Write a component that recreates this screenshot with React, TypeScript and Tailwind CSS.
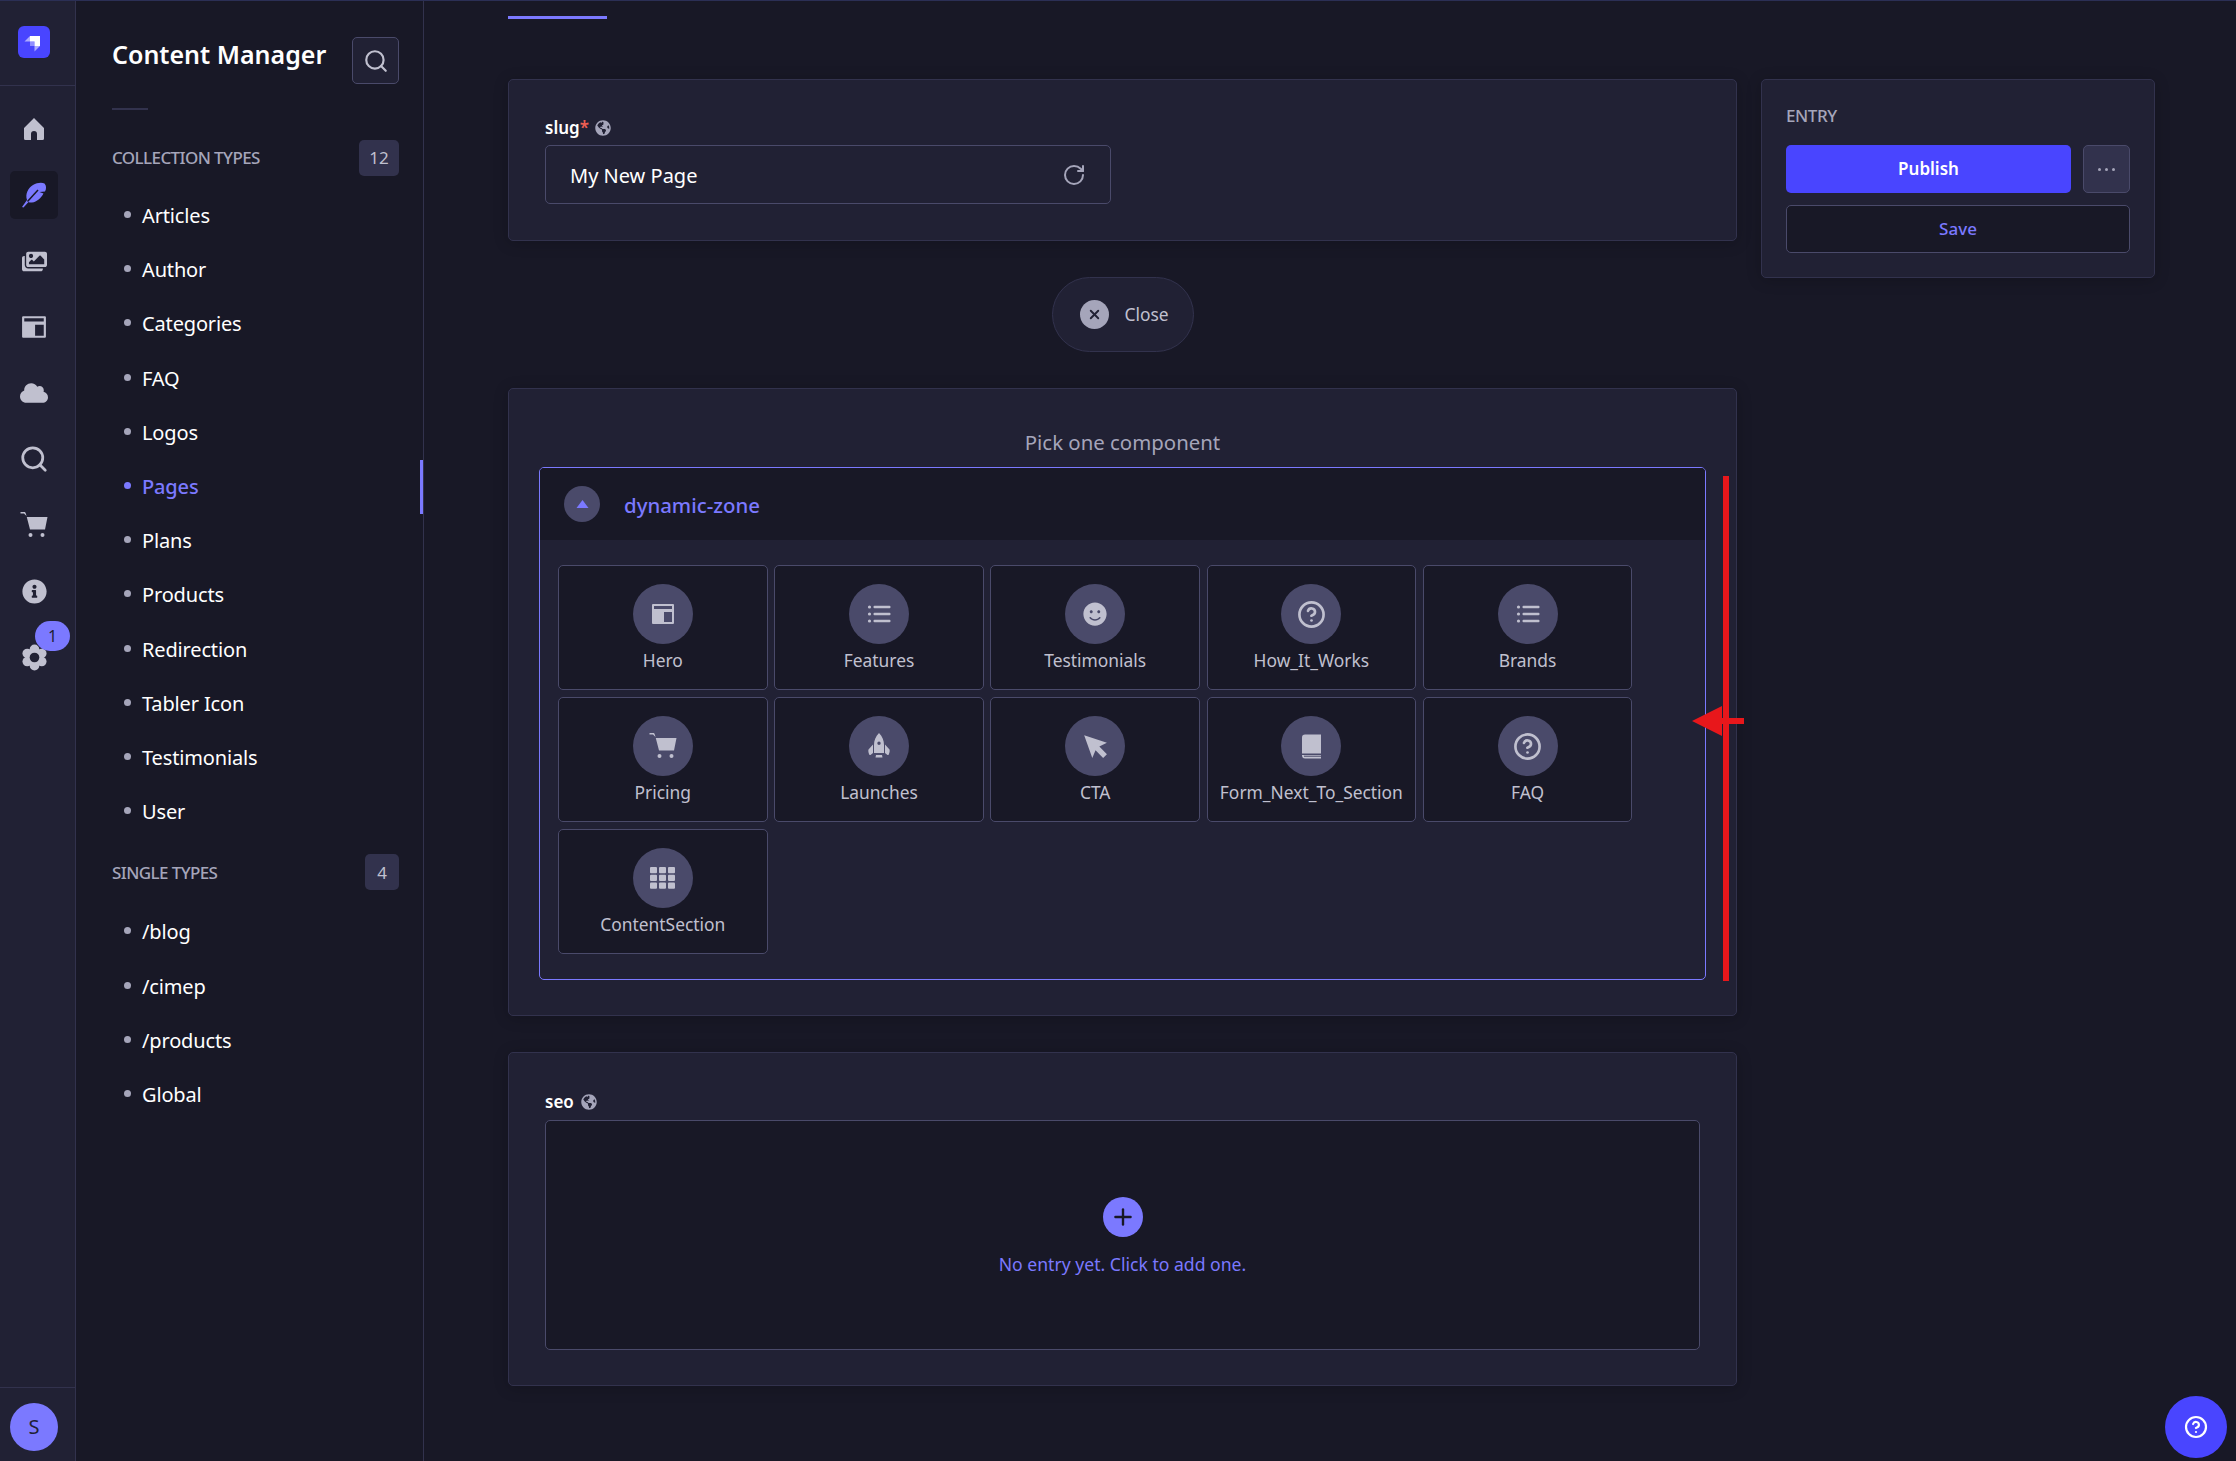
import React from 'react';
import { RotateCw, Search, X, Plus, CircleHelp } from 'lucide-react';
import { FaImages, FaCloud, FaInfoCircle, FaGlobeAmericas, FaSmile } from 'react-icons/fa';

const HomeIcon = () => (
  <svg viewBox="0 0 24 24" className="w-[24px] h-[24px] fill-[#c0c0cf]">
    <path d="M12 1 2 11v10.500A1.500 1.500 0 0 0 3.500 23H9v-6a3 3 0 0 1 6 0v6h5.500a1.500 1.500 0 0 0 1.500-1.500V11z" />
  </svg>
);

const FeatherIcon = () => (
  <svg viewBox="0 0 25 26" className="w-[25px] h-[26px] fill-[#7b79ff]">
    <path d="M0 25 5 18C3 12 6 6 11 3 15 .5 20 0 22.500 1.500 24.500 3.500 24.500 7 23 9.500l-5.500.5 4 1.500C19 16 15 20 10 20.500 8.500 20.800 7.500 20.500 6.500 20l-5 5.500z" />
    <path d="M5.500 19.500 16 8" stroke="#181826" strokeWidth="1.500" fill="none" />
  </svg>
);

const LayoutIcon = ({ size = 24 }: { size?: number }) => (
  <svg viewBox="0 0 24 24" width={size} height={size} className="fill-[#c0c0cf]">
    <path d="M1 3a1 1 0 0 1 1-1h20a1 1 0 0 1 1 1v18a1 1 0 0 1-1 1H2a1 1 0 0 1-1-1zm2 1v3h18V4zm10 6v10h8V10z" fillRule="evenodd" />
  </svg>
);

const CartIcon = ({ size = 28 }: { size?: number }) => (
  <svg viewBox="0 0 28 28" width={size} height={size} className="fill-[#c0c0cf]">
    <path d="M.5 1H5l.8 1.500L6.800 6H27.500L25 18.500H10L6.500 5 4 2.500H.5z" />
    <circle cx="10.500" cy="24" r="2" />
    <circle cx="22.500" cy="24" r="2" />
  </svg>
);

const GearIcon = () => (
  <svg viewBox="0 0 28 28" className="w-[27px] h-[27px]">
    <g className="fill-[#c0c0cf]">
      <circle cx="14" cy="5.500" r="5" />
      <circle cx="21.500" cy="9.800" r="5" />
      <circle cx="21.500" cy="18.200" r="5" />
      <circle cx="14" cy="22.500" r="5" />
      <circle cx="6.500" cy="18.200" r="5" />
      <circle cx="6.500" cy="9.800" r="5" />
      <circle cx="14" cy="14" r="8" />
    </g>
    <circle cx="14" cy="14" r="5" className="fill-[#212134]" />
  </svg>
);

const ListIcon = () => (
  <svg viewBox="0 0 24 24" className="w-[24px] h-[24px] fill-[#c0c0cf]">
    <circle cx="2.500" cy="5" r="1.600" />
    <circle cx="2.500" cy="12" r="1.600" />
    <circle cx="2.500" cy="19" r="1.600" />
    <rect x="6.500" y="3.800" width="17" height="2.400" rx="1" />
    <rect x="6.500" y="10.800" width="17" height="2.400" rx="1" />
    <rect x="6.500" y="17.800" width="17" height="2.400" rx="1" />
  </svg>
);

const RocketIcon = () => (
  <svg viewBox="0 0 24 28" className="w-[24px] h-[28px] fill-[#c0c0cf]">
    <path fillRule="evenodd" d="M12 1c3.500 3.500 5 7.500 5 12v8H7v-8C7 8.500 8.500 4.500 12 1zm0 8.500a1.700 1.700 0 1 0 0 3.400 1.700 1.700 0 0 0 0-3.400z" />
    <path d="M6 12.500v8.500l-2.500 2H2.500C1.500 21 1 19 1.500 17.500zM18 12.500V21l2.500 2h1c1-2 1.500-4 1-5.500zM9 23h6l.5 2.500h-7z" />
  </svg>
);

const PointerIcon = () => (
  <svg viewBox="0 0 24 24" className="w-[26px] h-[26px] fill-[#c0c0cf]">
    <path d="M2 2l21 7-7 3.500 7 7-3.500 3.500-7-7L9.500 23z" />
  </svg>
);

const BookIcon = () => (
  <svg viewBox="0 0 24 26" className="w-[24px] h-[27px] fill-[#c0c0cf]">
    <path d="M3 4a3 3 0 0 1 3-3h16v19H3z" />
    <path d="M3 21.500h19V25H6a3 3 0 0 1-3-2.500z" />
    <rect x="5" y="22.200" width="17" height="1" className="fill-[#4a4a6a]" />
  </svg>
);

const GridIcon = () => (
  <svg viewBox="0 0 25 22" className="w-[25px] h-[22px] fill-[#c0c0cf]">
    {[0, 7.800, 15.600].map((y) =>
      [0, 9, 18].map((x) => <rect key={`${x}-${y}`} x={x} y={y} width="7" height="6.200" rx="1" />)
    )}
  </svg>
);

const StrapiLogo = () => (
  <div className="w-[32px] h-[32px] rounded-[6px] bg-[#4945ff] flex items-center justify-center">
    <svg viewBox="0 0 32 32" className="w-[32px] h-[32px]">
      <path d="M22 10H12v5.500h4.500V20H22z" fill="#fff" />
      <path d="M12 10v5.500H6.500z" fill="#fff" opacity="0.55" />
      <path d="M16.500 20H22l-5.500 5.500z" fill="#fff" opacity="0.55" />
      <rect x="12" y="15.500" width="4.500" height="4.500" fill="#fff" opacity="0.4" />
    </svg>
  </div>
);

const collectionTypes = ['Articles', 'Author', 'Categories', 'FAQ', 'Logos', 'Pages', 'Plans', 'Products', 'Redirection', 'Tabler Icon', 'Testimonials', 'User'];
const singleTypes = ['/blog', '/cimep', '/products', 'Global'];

const components = [
  { name: 'Hero', icon: <LayoutIcon /> },
  { name: 'Features', icon: <ListIcon /> },
  { name: 'Testimonials', icon: <FaSmile className="w-[24px] h-[24px] text-[#c0c0cf]" /> },
  { name: 'How_It_Works', icon: <CircleHelp className="w-[29px] h-[29px] text-[#c0c0cf]" strokeWidth={2.2} /> },
  { name: 'Brands', icon: <ListIcon /> },
  { name: 'Pricing', icon: <CartIcon /> },
  { name: 'Launches', icon: <RocketIcon /> },
  { name: 'CTA', icon: <PointerIcon /> },
  { name: 'Form_Next_To_Section', icon: <BookIcon /> },
  { name: 'FAQ', icon: <CircleHelp className="w-[29px] h-[29px] text-[#c0c0cf]" strokeWidth={2.2} /> },
  { name: 'ContentSection', icon: <GridIcon /> },
];

const NavItem = ({ label, active }: { label: string; active?: boolean }) => (
  <div className="relative h-[54.2px] flex items-center pl-[12px]">
    <span className={`w-[7px] h-[7px] rounded-full mr-[11px] -mt-[3px] ${active ? 'bg-[#7b79ff]' : 'bg-[#a5a5ba]'}`} />
    <span className={`text-[20px] tracking-[-0.15px] ${active ? 'text-[#7b79ff] font-medium' : 'text-white'}`}>{label}</span>
    {active && <span className="absolute right-[-24px] top-0 w-[3px] h-full bg-[#7b79ff]" />}
  </div>
);

const SectionHeading = ({ label, count, badgeClass }: { label: string; count: number; badgeClass: string }) => (
  <div className="flex items-center justify-between">
    <span className="text-[17px] text-[#a5a5ba] font-medium tracking-[-0.6px]">{label}</span>
    <span className={`${badgeClass} h-[36px] rounded-[5px] bg-[#32324d] text-[#c0c0cf] text-[17px] flex items-center justify-center`}>{count}</span>
  </div>
);

const ComponentCard = ({ name, icon }: { name: string; icon: React.ReactNode }) => (
  <div className="h-[125px] rounded-[5px] border border-[#4a4a6a] bg-[#181826] flex flex-col items-center pt-[18px]">
    <div className="w-[60px] h-[60px] rounded-full bg-[#4a4a6a] flex items-center justify-center">{icon}</div>
    <span className="mt-[3px] text-[17.4px] text-[#c0c0cf] whitespace-nowrap">{name}</span>
  </div>
);

const panel = 'rounded-[5px] border border-[#32324d] bg-[#212134] shadow-[0_2px_15px_rgba(3,3,5,0.2)]';

export default function App() {
  return (
    <div className="h-[1461px] w-[2236px] overflow-hidden flex bg-[#181826] border-t border-[#2b2f55] font-['Noto_Sans',sans-serif]">
      <aside className="w-[76px] shrink-0 bg-[#212134] border-r border-[#32324d] flex flex-col">
        <div className="h-[85px] shrink-0 border-b border-[#32324d] pl-[18px] pt-[25px]">
          <StrapiLogo />
        </div>
        <nav className="flex flex-col items-start pl-[10px] gap-[18px] pt-[19px]">
          <div className="w-[48px] h-[48px] flex items-center justify-center"><HomeIcon /></div>
          <div className="w-[48px] h-[48px] rounded-[5px] bg-[#181826] flex items-center justify-center"><FeatherIcon /></div>
          <div className="w-[48px] h-[48px] flex items-center justify-center"><FaImages className="w-[25px] h-[25px] text-[#c0c0cf]" /></div>
          <div className="w-[48px] h-[48px] flex items-center justify-center"><LayoutIcon size={26} /></div>
          <div className="w-[48px] h-[48px] flex items-center justify-center"><FaCloud className="w-[28px] h-[28px] text-[#c0c0cf]" /></div>
          <div className="w-[48px] h-[48px] flex items-center justify-center"><Search className="w-[30px] h-[30px] text-[#c0c0cf]" strokeWidth={2.2} /></div>
          <div className="w-[48px] h-[48px] flex items-center justify-center"><CartIcon /></div>
          <div className="w-[48px] h-[48px] flex items-center justify-center"><FaInfoCircle className="w-[25px] h-[25px] text-[#c0c0cf]" /></div>
          <div className="relative w-[48px] h-[48px] flex items-center justify-center">
            <GearIcon />
            <span className="absolute left-[25px] top-[-12px] w-[35px] h-[30px] rounded-full bg-[#7b79ff] text-[#212134] text-[16px] flex items-center justify-center">1</span>
          </div>
        </nav>
        <div className="mt-auto h-[74px] shrink-0 border-t border-[#32324d] pl-[10px] pt-[15px]">
          <div className="w-[48px] h-[48px] rounded-full bg-[#7b79ff] text-[#212134] text-[20px] flex items-center justify-center">S</div>
        </div>
      </aside>

      <section className="w-[348px] shrink-0 border-r border-[#32324d] pl-[36px] pr-[24px]">
        <div className="flex justify-between pt-[36px] h-[84px]">
          <h1 className="text-[25px] leading-[34px] font-semibold text-white whitespace-nowrap">Content Manager</h1>
          <div className="w-[47px] h-[47px] rounded-[5px] border border-[#4a4a6a] bg-[#212134] flex items-center justify-center">
            <Search className="w-[26px] h-[26px] text-[#c0c0cf]" strokeWidth={2} />
          </div>
        </div>
        <div className="mt-[23px] w-[36px] h-[2px] bg-[#32324d]" />
        <div className="mt-[30px]">
          <SectionHeading label="COLLECTION TYPES" count={12} badgeClass="w-[40px]" />
          <div className="mt-[13px]">
            {collectionTypes.map((item) => <NavItem key={item} label={item} active={item === 'Pages'} />)}
          </div>
        </div>
        <div className="mt-[15px]">
          <SectionHeading label="SINGLE TYPES" count={4} badgeClass="w-[34px]" />
          <div className="mt-[15px]">
            {singleTypes.map((item) => <NavItem key={item} label={item} />)}
          </div>
        </div>
      </section>

      <main className="relative flex-1 pl-[84px]">
        <div className="mt-[15px] w-[99px] h-[3px] bg-[#7b79ff]" />
        <div className="mt-[60px] flex items-start gap-[24px]">
          <div className="w-[1229px] shrink-0 flex flex-col">
            <div className={`${panel} h-[162px] pt-[33px] pl-[36px]`}>
              <div className="flex items-center gap-[6px] h-[30px]">
                <span className="text-[17px] font-semibold text-white">slug<span className="text-[#ee5e52]">*</span></span>
                <FaGlobeAmericas className="w-[16px] h-[16px] text-[#a5a5ba]" />
              </div>
              <div className="mt-[2px] w-[566px] h-[59px] rounded-[5px] border border-[#4a4a6a] flex items-center justify-between pl-[24px] pr-[24px]">
                <span className="text-[20px] text-white pt-[2px]">My New Page</span>
                <RotateCw className="w-[24px] h-[24px] text-[#a5a5ba]" strokeWidth={2} />
              </div>
            </div>

            <div className="self-center mt-[36px] w-[142px] h-[75px] pl-[4px] rounded-full border border-[#32324d] bg-[#212134] flex items-center justify-center gap-[15px]">
              <span className="w-[29px] h-[29px] rounded-full bg-[#a5a5ba] flex items-center justify-center">
                <X className="w-[15px] h-[15px] text-[#212134]" strokeWidth={3} />
              </span>
              <span className="text-[17.4px] text-[#c0c0cf]">Close</span>
            </div>

            <div className={`${panel} mt-[36px] h-[628px] px-[30px] pt-[38px]`}>
              <div className="text-center text-[20.4px] leading-[30px] text-[#a5a5ba]">Pick one component</div>
              <div className="mt-[10px] h-[513px] rounded-[5px] border border-[#7b79ff] overflow-hidden">
                <div className="h-[72px] bg-[#181826] flex items-center pl-[24px]">
                  <span className="w-[36px] h-[36px] rounded-full bg-[#4a4a6a] flex items-center justify-center">
                    <svg viewBox="0 0 12 8" className="w-[13px] h-[8px] fill-[#7b79ff]"><path d="M6 0l6 8H0z" /></svg>
                  </span>
                  <span className="ml-[24px] pt-[2px] text-[20.4px] font-medium text-[#7b79ff]">dynamic-zone</span>
                </div>
                <div className="grid grid-cols-[repeat(5,209.6px)] gap-x-[6.6px] gap-y-[7px] pl-[18px] pt-[25px]">
                  {components.map((c) => <ComponentCard key={c.name} name={c.name} icon={c.icon} />)}
                </div>
              </div>
            </div>

            <div className={`${panel} mt-[36px] h-[334px] pt-[34px] px-[36px]`}>
              <div className="flex items-center gap-[7px] h-[30px]">
                <span className="text-[17px] font-semibold text-white">seo</span>
                <FaGlobeAmericas className="w-[16px] h-[16px] text-[#a5a5ba]" />
              </div>
              <div className="mt-[3px] h-[230px] rounded-[5px] border border-[#4a4a6a] bg-[#181826] flex flex-col items-center pt-[76px]">
                <span className="w-[40px] h-[40px] rounded-full bg-[#7b79ff] flex items-center justify-center">
                  <Plus className="w-[26px] h-[26px] text-[#181826]" strokeWidth={2.2} />
                </span>
                <span className="mt-[14px] text-[17.6px] text-[#7b79ff]">No entry yet. Click to add one.</span>
              </div>
            </div>
          </div>

          <aside className={`${panel} w-[394px] h-[199px] px-[24px] pt-[24px]`}>
            <div className="text-[17px] leading-[24px] font-medium text-[#a5a5ba] tracking-[-0.4px]">ENTRY</div>
            <div className="mt-[17px] flex gap-[12px]">
              <div className="flex-1 h-[48px] rounded-[5px] bg-[#4945ff] text-white text-[17px] font-semibold flex items-center justify-center">Publish</div>
              <div className="w-[47px] h-[48px] rounded-[5px] border border-[#4a4a6a] bg-[#32324d] flex items-center justify-center gap-[4px]">
                <span className="w-[3px] h-[3px] rounded-full bg-[#a5a5ba]" />
                <span className="w-[3px] h-[3px] rounded-full bg-[#a5a5ba]" />
                <span className="w-[3px] h-[3px] rounded-full bg-[#a5a5ba]" />
              </div>
            </div>
            <div className="mt-[12px] h-[48px] rounded-[5px] border border-[#4a4a6a] bg-[#181826] text-[#7b79ff] text-[17px] font-medium flex items-center justify-center">Save</div>
          </aside>
        </div>

        {/* red annotation drawn on top of the screenshot */}
        <div className="absolute left-[1299px] top-[475px] w-[6px] h-[505px] bg-[#e8171b]" />
        <div className="absolute left-[1268px] top-[705px] w-0 h-0 border-y-[15px] border-y-transparent border-r-[30px] border-r-[#e8171b]" />
        <div className="absolute left-[1298px] top-[717px] w-[22px] h-[6px] bg-[#e8171b]" />

        <div className="absolute left-[1741px] top-[1395px] w-[62px] h-[62px] rounded-full bg-[#4945ff] flex items-center justify-center">
          <CircleHelp className="w-[24px] h-[24px] text-white" strokeWidth={2.2} />
        </div>
      </main>
    </div>
  );
}
